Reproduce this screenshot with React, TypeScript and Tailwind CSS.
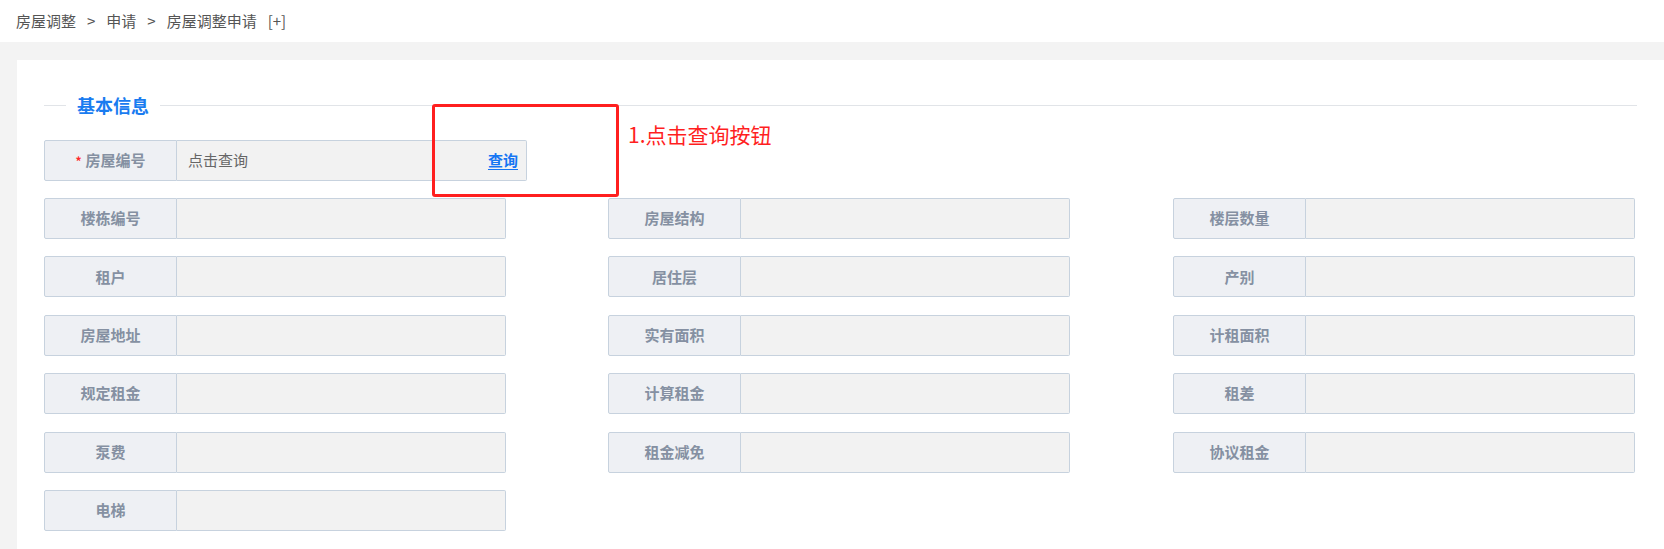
import React from "react";

const font = { fontFamily: '"Noto Sans CJK SC", "Noto Sans", sans-serif' };

function Field({ label, required }: { label: string; required?: boolean }) {
  return (
    <div className="flex h-[41px] w-[462px]">
      <div className="flex w-[133px] shrink-0 items-center justify-center rounded-l-[2px] border border-[#c7d2de] bg-[#eef0f4] text-[15px] font-bold text-[#8590a2]">
        {required && <span className="mr-[4px] text-[12px] text-[#ff2a2a]">*</span>}
        {label}
      </div>
      <div className="flex-1 rounded-r-[2px] border border-l-0 border-[#c7d2de] bg-[#f2f2f2]" />
    </div>
  );
}

export default function App() {
  const rows: (string | null)[][] = [
    ["楼栋编号", "房屋结构", "楼层数量"],
    ["租户", "居住层", "产别"],
    ["房屋地址", "实有面积", "计租面积"],
    ["规定租金", "计算租金", "租差"],
    ["泵费", "租金减免", "协议租金"],
    ["电梯", null, null],
  ];
  return (
    <div style={font} className="min-h-[549px] w-full bg-[#f3f3f3]">
      <div className="flex h-[42px] items-center bg-white pl-[16px] text-[15px] text-[#555]">
        <span>房屋调整</span>
        <span className="mx-[11px]">&gt;</span>
        <span>申请</span>
        <span className="mx-[11px]">&gt;</span>
        <span>房屋调整申请</span>
        <span className="ml-[11px]">[+]</span>
      </div>
      <div className="pl-[17px] pt-[18px]">
        <div className="relative min-h-[489px] bg-white px-[27px] pt-[33px] pb-[18px]">
          <div className="flex h-[24px] items-center">
            <div className="h-px w-[22px] bg-[#e1e4e8]" />
            <div className="mx-[11px] text-[18px] font-bold leading-none text-[#1a7cf0]">基本信息</div>
            <div className="h-px flex-1 bg-[#e1e4e8]" />
          </div>
          <div className="mt-[23px] flex h-[41px] w-[483px]">
            <div className="flex w-[133px] shrink-0 items-center justify-center rounded-l-[2px] border border-[#c7d2de] bg-[#eef0f4] text-[15px] font-bold text-[#8590a2]">
              <span className="mr-[4px] text-[12px] text-[#ff2a2a]">*</span>
              房屋编号
            </div>
            <div className="flex flex-1 items-center justify-between rounded-r-[2px] border border-l-0 border-[#c7d2de] bg-[#f2f2f2] pl-[11px] pr-[8px] text-[15px]">
              <span className="text-[#666]">点击查询</span>
              <span className="font-bold text-[#1676f3] underline underline-offset-[3px]">查询</span>
            </div>
          </div>
          <div className="mt-[17px] grid grid-cols-[462px_463px_462px] gap-x-[102px] gap-y-[17.4px]">
            {rows.flatMap((r, i) =>
              r.map((l, j) => (l ? <Field key={`${i}-${j}`} label={l} /> : <div key={`${i}-${j}`} />))
            )}
          </div>
          <div className="absolute left-[415px] top-[44px] h-[93px] w-[187px] rounded-[3px] border-[3px] border-[#ff1f1f]" />
          <div className="absolute left-[611px] top-[59px] text-[21px] leading-[30px] text-[#ff1f1f]">1.点击查询按钮</div>
        </div>
      </div>
    </div>
  );
}
